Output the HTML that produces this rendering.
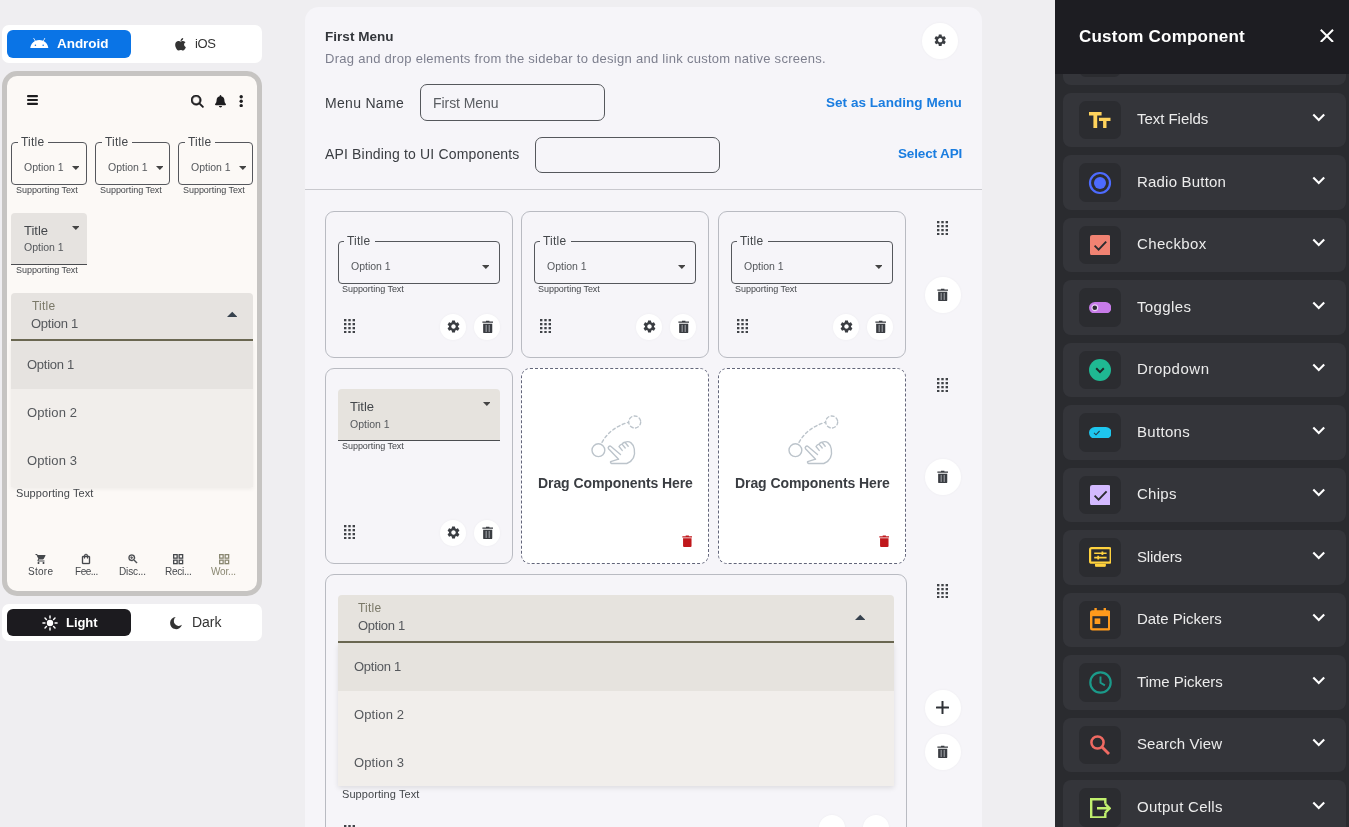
<!DOCTYPE html>
<html lang="en"><head><meta charset="utf-8"><title>Custom Component Builder</title>
<style>
html,body{margin:0;padding:0}
body{width:1349px;height:827px;overflow:hidden;position:relative;background:#efeef1;font-family:"Liberation Sans",sans-serif}
.abs{position:absolute;display:block}
.t{position:absolute;white-space:nowrap;will-change:transform}
.cbtn{position:absolute;background:#fff;border-radius:50%;box-shadow:0 0 3px rgba(0,0,0,.04)}
</style></head><body>
<div class="abs" style="left:2px;top:25px;width:260px;height:38px;background:#fff;border-radius:7px"></div>
<div class="abs" style="left:7px;top:30px;width:124px;height:28px;background:#0a74e6;border-radius:6px"></div>
<svg class="abs" style="left:30px;top:37.500px" width="18.600" height="10.500" viewBox="0 0 24 13.500" fill="#fff"><path d="M17.600 4.000l2-3.460a.42.42 0 0 0-.73-.42l-2.020 3.500A12.300 12.300 0 0 0 12 2.600c-1.740 0-3.380.36-4.850 1.020L5.130.12a.42.42 0 0 0-.73.420l2 3.460C2.970 5.870.600 9.350.250 13.500h23.500c-.35-4.150-2.720-7.630-6.150-9.500zM7 10.250a1 1 0 1 1 0-2 1 1 0 0 1 0 2zm10 0a1 1 0 1 1 0-2 1 1 0 0 1 0 2z"/></svg>
<div class="t " style="left:56.5px;top:33.5px;line-height:20px;font-size:13.5px;color:#fff;font-weight:bold;letter-spacing:-0.050px;">Android</div>
<svg class="abs" style="left:174px;top:37px" width="13" height="14.500" viewBox="0 0 384 512" fill="#333"><path d="M318.700 268.700c-.2-36.700 16.400-64.400 50-84.800-18.800-26.900-47.200-41.700-84.700-44.600-35.500-2.800-74.300 20.700-88.500 20.700-15 0-49.400-19.700-76.400-19.700C63.300 141.200 4 184.800 4 273.500q0 39.300 14.400 81.200c12.800 36.700 59 126.700 107.200 125.200 25.200-.6 43-17.900 75.800-17.900 31.800 0 48.300 17.900 76.400 17.900 48.600-.7 90.400-82.500 102.600-119.300-65.200-30.700-61.700-90-61.700-91.900zm-56.600-164.200c27.300-32.400 24.800-61.900 24-72.500-24.100 1.400-52 16.400-67.900 34.900-17.500 19.800-27.800 44.300-25.600 71.900 26.100 2 49.900-11.400 69.500-34.300z"/></svg>
<div class="t " style="left:195px;top:33.5px;line-height:20px;font-size:13px;color:#333;font-weight:normal;letter-spacing:-0.391px;">iOS</div>
<div class="abs" style="left:2px;top:71px;width:250px;height:515px;border:5px solid #c6c4c2;border-radius:15px;background:#fcf9f6"></div>
<svg class="abs" style="left:27px;top:94.500px" width="11" height="10" viewBox="0 0 11 10" fill="#1d1d1f"><rect y="0" width="11" height="2.200" rx="1"/><rect y="3.900" width="11" height="2.200" rx="1"/><rect y="7.800" width="11" height="2.200" rx="1"/></svg>
<svg class="abs" style="left:191px;top:95px" width="12.600" height="12.600" viewBox="0 0 512 512" fill="#1d1d1f" stroke="#1d1d1f" stroke-width="22"><path d="M416 208c0 45.900-14.900 88.300-40 122.700L502.600 457.400c12.500 12.500 12.500 32.800 0 45.300s-32.800 12.500-45.300 0L330.700 376c-34.400 25.200-76.800 40-122.700 40C93.100 416 0 322.900 0 208S93.100 0 208 0S416 93.100 416 208zM208 352a144 144 0 1 0 0-288 144 144 0 1 0 0 288z"/></svg>
<svg class="abs" style="left:215px;top:95px" width="11" height="12.500" viewBox="0 0 448 512" fill="#1d1d1f"><path d="M224 0c-17.700 0-32 14.300-32 32V51.200C119 66 64 130.600 64 208v18.800c0 47-17.300 92.400-48.500 127.600l-7.400 8.300c-8.400 9.400-10.400 22.900-5.300 34.400S19.400 416 32 416H416c12.600 0 24-7.400 29.200-18.900s3.100-25-5.300-34.400l-7.400-8.300C401.300 319.200 384 273.900 384 226.800V208c0-77.400-55-142-128-156.800V32c0-17.700-14.300-32-32-32zm45.300 493.300c12-12 18.700-28.300 18.700-45.300H224 160c0 17 6.700 33.300 18.700 45.300s28.300 18.700 45.300 18.700s33.300-6.700 45.300-18.700z"/></svg>
<svg class="abs" style="left:239px;top:95px" width="4.400" height="12.400" viewBox="0 0 4.400 12.400" fill="#1d1d1f"><circle cx="2.200" cy="1.800" r="1.700"/><circle cx="2.200" cy="6.200" r="1.700"/><circle cx="2.200" cy="10.600" r="1.700"/></svg>
<div class="abs" style="left:11px;top:142px;width:74px;height:40.5px;border:1px solid #55575c;border-radius:4px"></div><div class="abs" style="left:17.5px;top:140px;width:30.5px;height:4px;background:#fcf9f6"></div><div class="t " style="left:20.5px;top:131.5px;line-height:20px;font-size:12px;color:#44474b;font-weight:normal;letter-spacing:0.233px;">Title</div><div class="t " style="left:24.3px;top:156.9px;line-height:20px;font-size:10.5px;color:#55585c;font-weight:normal;letter-spacing:-0.000px;">Option 1</div><svg class="abs" style="left:71.5px;top:166.1px" width="7.6" height="4" viewBox="0 0 10 5" fill="#444"><path d="M0 0h10L5 5z"/></svg><div class="t " style="left:15.5px;top:179.9px;line-height:20px;font-size:9px;color:#44474b;font-weight:normal;letter-spacing:-0.039px;">Supporting Text</div>
<div class="abs" style="left:95px;top:142px;width:73px;height:40.5px;border:1px solid #55575c;border-radius:4px"></div><div class="abs" style="left:101.5px;top:140px;width:30.5px;height:4px;background:#fcf9f6"></div><div class="t " style="left:104.5px;top:131.5px;line-height:20px;font-size:12px;color:#44474b;font-weight:normal;letter-spacing:0.233px;">Title</div><div class="t " style="left:108.3px;top:156.9px;line-height:20px;font-size:10.5px;color:#55585c;font-weight:normal;letter-spacing:-0.000px;">Option 1</div><svg class="abs" style="left:155.5px;top:166.1px" width="7.6" height="4" viewBox="0 0 10 5" fill="#444"><path d="M0 0h10L5 5z"/></svg><div class="t " style="left:99.5px;top:179.9px;line-height:20px;font-size:9px;color:#44474b;font-weight:normal;letter-spacing:-0.039px;">Supporting Text</div>
<div class="abs" style="left:178px;top:142px;width:73px;height:40.5px;border:1px solid #55575c;border-radius:4px"></div><div class="abs" style="left:184.5px;top:140px;width:30.5px;height:4px;background:#fcf9f6"></div><div class="t " style="left:187.5px;top:131.5px;line-height:20px;font-size:12px;color:#44474b;font-weight:normal;letter-spacing:0.233px;">Title</div><div class="t " style="left:191.3px;top:156.9px;line-height:20px;font-size:10.5px;color:#55585c;font-weight:normal;letter-spacing:-0.000px;">Option 1</div><svg class="abs" style="left:238.5px;top:166.1px" width="7.6" height="4" viewBox="0 0 10 5" fill="#444"><path d="M0 0h10L5 5z"/></svg><div class="t " style="left:182.5px;top:179.9px;line-height:20px;font-size:9px;color:#44474b;font-weight:normal;letter-spacing:-0.039px;">Supporting Text</div>
<div class="abs" style="left:11px;top:213px;width:76px;height:51px;background:#e6e3e0;border-radius:4px 4px 0 0;border-bottom:1px solid #4a4c50"></div>
<div class="t " style="left:23.5px;top:220.5px;line-height:20px;font-size:13px;color:#44474b;font-weight:normal;">Title</div>
<div class="t " style="left:23.5px;top:237.0px;line-height:20px;font-size:10.5px;color:#55585c;font-weight:normal;letter-spacing:-0.000px;">Option 1</div>
<svg class="abs" style="left:71.7px;top:226.2px" width="7.6" height="4" viewBox="0 0 10 5" fill="#444"><path d="M0 0h10L5 5z"/></svg>
<div class="t " style="left:15.5px;top:260.0px;line-height:20px;font-size:9px;color:#44474b;font-weight:normal;letter-spacing:-0.039px;">Supporting Text</div>
<div class="abs" style="left:11px;top:293px;width:242px;height:46px;background:#e6e3e0;border-radius:4px 4px 0 0;border-bottom:2px solid #6b6852"></div>
<div class="t " style="left:31.8px;top:296.0px;line-height:20px;font-size:12px;color:#7a7868;font-weight:normal;letter-spacing:0.233px;">Title</div>
<div class="t " style="left:31.3px;top:313.7px;line-height:20px;font-size:13px;color:#55585c;font-weight:normal;letter-spacing:-0.270px;">Option 1</div>
<svg class="abs" style="left:226.9px;top:311.1px" width="10.5" height="6.5" viewBox="0 0 10 5" fill="#37424e"><path d="M0 5h10L5 0z"/></svg>
<div class="abs" style="left:11px;top:341px;width:242px;height:145.500px;background:#f1eeeb;box-shadow:0 2px 4px rgba(0,0,0,.06)"></div>
<div class="abs" style="left:11px;top:341px;width:242px;height:48px;background:#e6e3e0"></div>
<div class="t " style="left:27.3px;top:354.8px;line-height:20px;font-size:13px;color:#55585c;font-weight:normal;letter-spacing:-0.270px;">Option 1</div>
<div class="t " style="left:27.3px;top:402.9px;line-height:20px;font-size:13px;color:#55585c;font-weight:normal;letter-spacing:0.130px;">Option 2</div>
<div class="t " style="left:27.3px;top:451.0px;line-height:20px;font-size:13px;color:#55585c;font-weight:normal;letter-spacing:0.130px;">Option 3</div>
<div class="t " style="left:15.5px;top:482.6px;line-height:20px;font-size:11px;color:#44474b;font-weight:normal;letter-spacing:0.077px;">Supporting Text</div>
<svg class="abs" style="left:35.0px;top:553px" width="12" height="12" viewBox="0 0 24 24" fill="#45484c" stroke="#45484c" stroke-width=".7"><path stroke="none" d="M7 18c-1.100 0-1.990.9-1.990 2S5.900 22 7 22s2-.9 2-2-.9-2-2-2zM1 2v2h2l3.600 7.590-1.350 2.450c-.16.280-.25.610-.25.960 0 1.100.9 2 2 2h12v-2H7.420c-.14 0-.25-.110-.25-.25l.03-.120.9-1.630h7.450c.75 0 1.410-.410 1.750-1.030l3.580-6.490A1.003 1.003 0 0 0 20 4H5.210l-.94-2H1zm16 16c-1.100 0-1.990.9-1.990 2s.890 2 1.990 2 2-.9 2-2-.9-2-2-2z"/></svg>
<div class="t " style="left:28.2px;top:562.3px;line-height:20px;font-size:10px;color:#45484c;font-weight:normal;letter-spacing:0.259px;">Store</div>
<svg class="abs" style="left:80.0px;top:553px" width="12" height="12" viewBox="0 0 24 24" fill="#45484c" stroke="#45484c" stroke-width=".7"><path d="M18 6h-2c0-2.210-1.790-4-4-4S8 3.790 8 6H6c-1.100 0-2 .9-2 2v12c0 1.100.9 2 2 2h12c1.100 0 2-.9 2-2V8c0-1.100-.9-2-2-2zm-6-2c1.100 0 2 .9 2 2h-4c0-1.100.9-2 2-2zm6 16H6V8h2v2c0 .55.450 1 1 1s1-.45 1-1V8h4v2c0 .55.450 1 1 1s1-.45 1-1V8h2v12z"/></svg>
<div class="t " style="left:74.5px;top:562.3px;line-height:20px;font-size:10px;color:#45484c;font-weight:normal;letter-spacing:-0.480px;">Fee...</div>
<svg class="abs" style="left:126.5px;top:553px" width="12" height="12" viewBox="0 0 24 24" fill="#45484c" stroke="#45484c" stroke-width=".7"><path d="M15.500 14h-.79l-.28-.27A6.470 6.470 0 0 0 16 9.500 6.500 6.500 0 1 0 9.500 16c1.610 0 3.090-.59 4.230-1.570l.27.280v.79l5 4.990L20.490 19l-4.990-5zm-6 0C7.010 14 5 11.990 5 9.500S7.010 5 9.500 5 14 7.010 14 9.500 11.990 14 9.500 14zm.5-7H9v2H7v1h2v2h1v-2h2V9h-2z"/></svg>
<div class="t " style="left:118.9px;top:562.3px;line-height:20px;font-size:10px;color:#45484c;font-weight:normal;letter-spacing:-0.126px;">Disc...</div>
<svg class="abs" style="left:172.0px;top:553px" width="12" height="12" viewBox="0 0 24 24" fill="#45484c" stroke="#45484c" stroke-width=".7"><g fill="none" stroke-width="2.600"><rect x="3.300" y="3.300" width="7" height="7"/><rect x="14.300" y="3.300" width="7" height="7"/><rect x="3.300" y="14.300" width="7" height="7"/><rect x="14.300" y="14.300" width="7" height="7"/></g></svg>
<div class="t " style="left:164.5px;top:562.3px;line-height:20px;font-size:10px;color:#45484c;font-weight:normal;letter-spacing:-0.249px;">Reci...</div>
<svg class="abs" style="left:217.5px;top:553px" width="12" height="12" viewBox="0 0 24 24" fill="#8a8872" stroke="#8a8872" stroke-width=".7"><g fill="none" stroke-width="2.600"><rect x="3.300" y="3.300" width="7" height="7"/><rect x="14.300" y="3.300" width="7" height="7"/><rect x="3.300" y="14.300" width="7" height="7"/><rect x="14.300" y="14.300" width="7" height="7"/></g></svg>
<div class="t " style="left:210.9px;top:562.3px;line-height:20px;font-size:10px;color:#8a8872;font-weight:normal;letter-spacing:-0.173px;">Wor...</div>
<div class="abs" style="left:2px;top:604px;width:260px;height:37px;background:#fff;border-radius:7px"></div>
<div class="abs" style="left:7px;top:609px;width:124px;height:27px;background:#1c1b1f;border-radius:6px"></div>
<svg class="abs" style="left:41.800px;top:615px" width="16" height="16" viewBox="0 0 24 24" fill="#fff"><circle cx="12" cy="12" r="4.800"/><path d="M19.60 12.00L22.60 12.00" stroke="#fff" stroke-width="2.200" stroke-linecap="round"/><path d="M17.37 17.37L19.50 19.50" stroke="#fff" stroke-width="2.200" stroke-linecap="round"/><path d="M12.00 19.60L12.00 22.60" stroke="#fff" stroke-width="2.200" stroke-linecap="round"/><path d="M6.63 17.37L4.50 19.50" stroke="#fff" stroke-width="2.200" stroke-linecap="round"/><path d="M4.40 12.00L1.40 12.00" stroke="#fff" stroke-width="2.200" stroke-linecap="round"/><path d="M6.63 6.63L4.50 4.50" stroke="#fff" stroke-width="2.200" stroke-linecap="round"/><path d="M12.00 4.40L12.00 1.40" stroke="#fff" stroke-width="2.200" stroke-linecap="round"/><path d="M17.37 6.63L19.50 4.50" stroke="#fff" stroke-width="2.200" stroke-linecap="round"/></svg>
<div class="t " style="left:65.5px;top:612.5px;line-height:20px;font-size:13px;color:#fff;font-weight:bold;letter-spacing:-0.053px;">Light</div>
<svg class="abs" style="left:169px;top:615.500px" width="14" height="14" viewBox="0 0 24 24" fill="#333"><path d="M11.500 1.800a10.400 10.400 0 1 0 10.700 13.400 8.200 8.200 0 0 1 -10.700 -13.400z"/></svg>
<div class="t " style="left:192px;top:612.3px;line-height:20px;font-size:14px;color:#333;font-weight:normal;letter-spacing:-0.016px;">Dark</div>
<div class="abs" style="left:305px;top:7px;width:677px;height:840px;background:#f6f5f9;border-radius:14px 14px 0 0"></div>
<div class="t " style="left:324.5px;top:26.8px;line-height:20px;font-size:13.5px;color:#33363b;font-weight:bold;letter-spacing:0.033px;">First Menu</div>
<div class="t " style="left:324.5px;top:49.0px;line-height:20px;font-size:13px;color:#7d7f8e;font-weight:normal;letter-spacing:0.279px;">Drag and drop elements from the sidebar to design and link custom native screens.</div>
<div class="cbtn" style="left:922.0px;top:23.0px;width:36px;height:36px"></div><svg class="abs" style="left:932.8px;top:33.3px" width="14.4" height="14.4" viewBox="0 0 24 24" fill="#3a3d42"><path d="M19.14 12.94c.04-.3.06-.61.06-.94 0-.32-.02-.64-.07-.94l2.03-1.58a.49.49 0 0 0 .12-.61l-1.92-3.32a.488.488 0 0 0-.59-.22l-2.39.96c-.5-.38-1.03-.7-1.62-.94l-.36-2.54a.484.484 0 0 0-.48-.41h-3.84c-.24 0-.43.17-.47.41l-.36 2.54c-.59.24-1.13.57-1.62.94l-2.39-.96c-.22-.08-.47 0-.59.22L2.74 8.87c-.12.21-.08.47.12.61l2.03 1.58c-.05.3-.09.63-.09.94s.02.64.07.94l-2.03 1.58a.49.49 0 0 0-.12.61l1.92 3.32c.12.22.37.29.59.22l2.39-.96c.5.38 1.03.7 1.62.94l.36 2.54c.05.24.24.41.48.41h3.84c.24 0 .44-.17.47-.41l.36-2.54c.59-.24 1.13-.56 1.62-.94l2.39.96c.22.08.47 0 .59-.22l1.92-3.32c.12-.22.07-.47-.12-.61l-2.01-1.58zM12 15.6c-1.98 0-3.6-1.62-3.6-3.6s1.620-3.6 3.6-3.600 3.6 1.62 3.6 3.6-1.62 3.600-3.6 3.600z"/></svg>
<div class="t " style="left:324.5px;top:92.6px;line-height:20px;font-size:14px;color:#3a3d42;font-weight:normal;letter-spacing:0.304px;">Menu Name</div>
<div class="abs" style="left:420px;top:84px;width:183px;height:35px;border:1px solid #55585c;border-radius:7px"></div>
<div class="t " style="left:433px;top:92.6px;line-height:20px;font-size:14px;color:#5a5d62;font-weight:normal;letter-spacing:-0.062px;">First Menu</div>
<div class="t " style="left:826px;top:92.5px;line-height:20px;font-size:13.5px;color:#1a7de0;font-weight:bold;letter-spacing:0.041px;">Set as Landing Menu</div>
<div class="t " style="left:324.5px;top:144.4px;line-height:20px;font-size:14px;color:#3a3d42;font-weight:normal;letter-spacing:0.165px;">API Binding to UI Components</div>
<div class="abs" style="left:535px;top:137px;width:183px;height:33.500px;border:1px solid #55585c;border-radius:7px"></div>
<div class="t " style="left:897.5px;top:144.3px;line-height:20px;font-size:13.5px;color:#1a7de0;font-weight:bold;letter-spacing:-0.133px;">Select API</div>
<div class="abs" style="left:305px;top:189px;width:677px;height:1px;background:#c9c9ce"></div>
<div class="abs" style="left:325px;top:211px;width:185.500px;height:145px;border:1px solid #b9bbc2;border-radius:9px"></div>
<div class="abs" style="left:338px;top:241px;width:160px;height:40.5px;border:1px solid #55575c;border-radius:4px"></div><div class="abs" style="left:344px;top:239px;width:30.5px;height:4px;background:#f6f5f9"></div><div class="t " style="left:347px;top:230.5px;line-height:20px;font-size:12px;color:#44474b;font-weight:normal;letter-spacing:0.233px;">Title</div><div class="t " style="left:350.5px;top:255.9px;line-height:20px;font-size:10.5px;color:#55585c;font-weight:normal;letter-spacing:-0.000px;">Option 1</div><svg class="abs" style="left:481.7px;top:265.1px" width="7.6" height="4" viewBox="0 0 10 5" fill="#444"><path d="M0 0h10L5 5z"/></svg><div class="t " style="left:341.5px;top:279.1px;line-height:20px;font-size:9px;color:#44474b;font-weight:normal;letter-spacing:-0.039px;">Supporting Text</div>
<svg class="abs" style="left:344px;top:318.7px" width="11" height="14.3" viewBox="0 0 11 14.3" fill="#3f4247"><rect x="0.0" y="0.0" width="2.4" height="2.3"/><rect x="4.3" y="0.0" width="2.4" height="2.3"/><rect x="8.6" y="0.0" width="2.4" height="2.3"/><rect x="0.0" y="4.0" width="2.4" height="2.3"/><rect x="4.3" y="4.0" width="2.4" height="2.3"/><rect x="8.6" y="4.0" width="2.4" height="2.3"/><rect x="0.0" y="8.0" width="2.4" height="2.3"/><rect x="4.3" y="8.0" width="2.4" height="2.3"/><rect x="8.6" y="8.0" width="2.4" height="2.3"/><rect x="0.0" y="12.0" width="2.4" height="2.3"/><rect x="4.3" y="12.0" width="2.4" height="2.3"/><rect x="8.6" y="12.0" width="2.4" height="2.3"/></svg>
<div class="cbtn" style="left:440.3px;top:314.1px;width:26px;height:26px"></div><svg class="abs" style="left:445.8px;top:319.1px" width="15" height="15" viewBox="0 0 24 24" fill="#3a3d42"><path d="M19.14 12.94c.04-.3.06-.61.06-.94 0-.32-.02-.64-.07-.94l2.03-1.58a.49.49 0 0 0 .12-.61l-1.92-3.32a.488.488 0 0 0-.59-.22l-2.39.96c-.5-.38-1.03-.7-1.62-.94l-.36-2.54a.484.484 0 0 0-.48-.41h-3.84c-.24 0-.43.17-.47.41l-.36 2.54c-.59.24-1.13.57-1.62.94l-2.39-.96c-.22-.08-.47 0-.59.22L2.74 8.87c-.12.21-.08.47.12.61l2.03 1.58c-.05.3-.09.63-.09.94s.02.64.07.94l-2.03 1.58a.49.49 0 0 0-.12.61l1.92 3.32c.12.22.37.29.59.22l2.39-.96c.5.38 1.03.7 1.62.94l.36 2.54c.05.24.24.41.48.41h3.84c.24 0 .44-.17.47-.41l.36-2.54c.59-.24 1.13-.56 1.62-.94l2.39.96c.22.08.47 0 .59-.22l1.92-3.32c.12-.22.07-.47-.12-.61l-2.01-1.58zM12 15.6c-1.98 0-3.6-1.62-3.6-3.6s1.620-3.6 3.6-3.600 3.6 1.62 3.6 3.6-1.62 3.600-3.6 3.600z"/></svg>
<div class="cbtn" style="left:474.2px;top:314.1px;width:26px;height:26px"></div><svg class="abs" style="left:481.5px;top:319.6px" width="11.4" height="13.6" viewBox="0 0 12 14"><path fill="#3a3d42" d="M4.2 0.6h3.6v0.9H11.6v1.3H0.400V1.500H4.200z"/><path fill="#3a3d42" d="M1.200 3.700h9.600V12.600a1.200 1.200 0 0 1 -1.200 1.200H2.400a1.200 1.200 0 0 1 -1.200 -1.200z"/><rect fill="#9a9ca2" x="3.8" y="5" width="1.200" height="7.400"/><rect fill="#9a9ca2" x="7" y="5" width="1.200" height="7.400"/></svg>
<div class="abs" style="left:521px;top:211px;width:185.500px;height:145px;border:1px solid #b9bbc2;border-radius:9px"></div>
<div class="abs" style="left:534px;top:241px;width:160px;height:40.5px;border:1px solid #55575c;border-radius:4px"></div><div class="abs" style="left:540px;top:239px;width:30.5px;height:4px;background:#f6f5f9"></div><div class="t " style="left:543px;top:230.5px;line-height:20px;font-size:12px;color:#44474b;font-weight:normal;letter-spacing:0.233px;">Title</div><div class="t " style="left:546.5px;top:255.9px;line-height:20px;font-size:10.5px;color:#55585c;font-weight:normal;letter-spacing:-0.000px;">Option 1</div><svg class="abs" style="left:677.7px;top:265.1px" width="7.6" height="4" viewBox="0 0 10 5" fill="#444"><path d="M0 0h10L5 5z"/></svg><div class="t " style="left:537.5px;top:279.1px;line-height:20px;font-size:9px;color:#44474b;font-weight:normal;letter-spacing:-0.039px;">Supporting Text</div>
<svg class="abs" style="left:540px;top:318.7px" width="11" height="14.3" viewBox="0 0 11 14.3" fill="#3f4247"><rect x="0.0" y="0.0" width="2.4" height="2.3"/><rect x="4.3" y="0.0" width="2.4" height="2.3"/><rect x="8.6" y="0.0" width="2.4" height="2.3"/><rect x="0.0" y="4.0" width="2.4" height="2.3"/><rect x="4.3" y="4.0" width="2.4" height="2.3"/><rect x="8.6" y="4.0" width="2.4" height="2.3"/><rect x="0.0" y="8.0" width="2.4" height="2.3"/><rect x="4.3" y="8.0" width="2.4" height="2.3"/><rect x="8.6" y="8.0" width="2.4" height="2.3"/><rect x="0.0" y="12.0" width="2.4" height="2.3"/><rect x="4.3" y="12.0" width="2.4" height="2.3"/><rect x="8.6" y="12.0" width="2.4" height="2.3"/></svg>
<div class="cbtn" style="left:636.3px;top:314.1px;width:26px;height:26px"></div><svg class="abs" style="left:641.8px;top:319.1px" width="15" height="15" viewBox="0 0 24 24" fill="#3a3d42"><path d="M19.14 12.94c.04-.3.06-.61.06-.94 0-.32-.02-.64-.07-.94l2.03-1.58a.49.49 0 0 0 .12-.61l-1.92-3.32a.488.488 0 0 0-.59-.22l-2.39.96c-.5-.38-1.03-.7-1.62-.94l-.36-2.54a.484.484 0 0 0-.48-.41h-3.84c-.24 0-.43.17-.47.41l-.36 2.54c-.59.24-1.13.57-1.62.94l-2.39-.96c-.22-.08-.47 0-.59.22L2.74 8.87c-.12.21-.08.47.12.61l2.03 1.58c-.05.3-.09.63-.09.94s.02.64.07.94l-2.03 1.58a.49.49 0 0 0-.12.61l1.92 3.32c.12.22.37.29.59.22l2.39-.96c.5.38 1.03.7 1.62.94l.36 2.54c.05.24.24.41.48.41h3.84c.24 0 .44-.17.47-.41l.36-2.54c.59-.24 1.13-.56 1.62-.94l2.39.96c.22.08.47 0 .59-.22l1.92-3.32c.12-.22.07-.47-.12-.61l-2.01-1.58zM12 15.6c-1.98 0-3.6-1.62-3.6-3.6s1.620-3.6 3.6-3.600 3.6 1.62 3.6 3.6-1.62 3.600-3.6 3.600z"/></svg>
<div class="cbtn" style="left:670.2px;top:314.1px;width:26px;height:26px"></div><svg class="abs" style="left:677.5px;top:319.6px" width="11.4" height="13.6" viewBox="0 0 12 14"><path fill="#3a3d42" d="M4.2 0.6h3.6v0.9H11.6v1.3H0.400V1.500H4.200z"/><path fill="#3a3d42" d="M1.200 3.700h9.600V12.600a1.200 1.200 0 0 1 -1.200 1.200H2.400a1.200 1.200 0 0 1 -1.200 -1.200z"/><rect fill="#9a9ca2" x="3.8" y="5" width="1.200" height="7.400"/><rect fill="#9a9ca2" x="7" y="5" width="1.200" height="7.400"/></svg>
<div class="abs" style="left:718px;top:211px;width:185.500px;height:145px;border:1px solid #b9bbc2;border-radius:9px"></div>
<div class="abs" style="left:731px;top:241px;width:160px;height:40.5px;border:1px solid #55575c;border-radius:4px"></div><div class="abs" style="left:737px;top:239px;width:30.5px;height:4px;background:#f6f5f9"></div><div class="t " style="left:740px;top:230.5px;line-height:20px;font-size:12px;color:#44474b;font-weight:normal;letter-spacing:0.233px;">Title</div><div class="t " style="left:743.5px;top:255.9px;line-height:20px;font-size:10.5px;color:#55585c;font-weight:normal;letter-spacing:-0.000px;">Option 1</div><svg class="abs" style="left:874.7px;top:265.1px" width="7.6" height="4" viewBox="0 0 10 5" fill="#444"><path d="M0 0h10L5 5z"/></svg><div class="t " style="left:734.5px;top:279.1px;line-height:20px;font-size:9px;color:#44474b;font-weight:normal;letter-spacing:-0.039px;">Supporting Text</div>
<svg class="abs" style="left:737px;top:318.7px" width="11" height="14.3" viewBox="0 0 11 14.3" fill="#3f4247"><rect x="0.0" y="0.0" width="2.4" height="2.3"/><rect x="4.3" y="0.0" width="2.4" height="2.3"/><rect x="8.6" y="0.0" width="2.4" height="2.3"/><rect x="0.0" y="4.0" width="2.4" height="2.3"/><rect x="4.3" y="4.0" width="2.4" height="2.3"/><rect x="8.6" y="4.0" width="2.4" height="2.3"/><rect x="0.0" y="8.0" width="2.4" height="2.3"/><rect x="4.3" y="8.0" width="2.4" height="2.3"/><rect x="8.6" y="8.0" width="2.4" height="2.3"/><rect x="0.0" y="12.0" width="2.4" height="2.3"/><rect x="4.3" y="12.0" width="2.4" height="2.3"/><rect x="8.6" y="12.0" width="2.4" height="2.3"/></svg>
<div class="cbtn" style="left:833.3px;top:314.1px;width:26px;height:26px"></div><svg class="abs" style="left:838.8px;top:319.1px" width="15" height="15" viewBox="0 0 24 24" fill="#3a3d42"><path d="M19.14 12.94c.04-.3.06-.61.06-.94 0-.32-.02-.64-.07-.94l2.03-1.58a.49.49 0 0 0 .12-.61l-1.92-3.32a.488.488 0 0 0-.59-.22l-2.39.96c-.5-.38-1.03-.7-1.62-.94l-.36-2.54a.484.484 0 0 0-.48-.41h-3.84c-.24 0-.43.17-.47.41l-.36 2.54c-.59.24-1.13.57-1.62.94l-2.39-.96c-.22-.08-.47 0-.59.22L2.74 8.87c-.12.21-.08.47.12.61l2.03 1.58c-.05.3-.09.63-.09.94s.02.64.07.94l-2.03 1.58a.49.49 0 0 0-.12.61l1.92 3.32c.12.22.37.29.59.22l2.39-.96c.5.38 1.03.7 1.62.94l.36 2.54c.05.24.24.41.48.41h3.84c.24 0 .44-.17.47-.41l.36-2.54c.59-.24 1.13-.56 1.62-.94l2.39.96c.22.08.47 0 .59-.22l1.92-3.32c.12-.22.07-.47-.12-.61l-2.01-1.58zM12 15.6c-1.98 0-3.6-1.62-3.6-3.6s1.620-3.6 3.6-3.600 3.6 1.62 3.6 3.6-1.62 3.600-3.6 3.600z"/></svg>
<div class="cbtn" style="left:867.2px;top:314.1px;width:26px;height:26px"></div><svg class="abs" style="left:874.5px;top:319.6px" width="11.4" height="13.6" viewBox="0 0 12 14"><path fill="#3a3d42" d="M4.2 0.6h3.6v0.9H11.6v1.3H0.400V1.500H4.200z"/><path fill="#3a3d42" d="M1.200 3.700h9.600V12.600a1.200 1.200 0 0 1 -1.200 1.200H2.400a1.200 1.200 0 0 1 -1.200 -1.200z"/><rect fill="#9a9ca2" x="3.8" y="5" width="1.200" height="7.400"/><rect fill="#9a9ca2" x="7" y="5" width="1.200" height="7.400"/></svg>
<svg class="abs" style="left:937px;top:220.8px" width="11" height="14.3" viewBox="0 0 11 14.3" fill="#3f4247"><rect x="0.0" y="0.0" width="2.4" height="2.3"/><rect x="4.3" y="0.0" width="2.4" height="2.3"/><rect x="8.6" y="0.0" width="2.4" height="2.3"/><rect x="0.0" y="4.0" width="2.4" height="2.3"/><rect x="4.3" y="4.0" width="2.4" height="2.3"/><rect x="8.6" y="4.0" width="2.4" height="2.3"/><rect x="0.0" y="8.0" width="2.4" height="2.3"/><rect x="4.3" y="8.0" width="2.4" height="2.3"/><rect x="8.6" y="8.0" width="2.4" height="2.3"/><rect x="0.0" y="12.0" width="2.4" height="2.3"/><rect x="4.3" y="12.0" width="2.4" height="2.3"/><rect x="8.6" y="12.0" width="2.4" height="2.3"/></svg>
<div class="cbtn" style="left:924.5px;top:277.0px;width:36px;height:36px"></div><svg class="abs" style="left:936.8px;top:287.9px" width="11.4" height="13.6" viewBox="0 0 12 14"><path fill="#3a3d42" d="M4.2 0.6h3.6v0.9H11.6v1.3H0.400V1.500H4.200z"/><path fill="#3a3d42" d="M1.200 3.700h9.600V12.600a1.200 1.200 0 0 1 -1.200 1.200H2.400a1.200 1.200 0 0 1 -1.200 -1.200z"/><rect fill="#9a9ca2" x="3.8" y="5" width="1.200" height="7.400"/><rect fill="#9a9ca2" x="7" y="5" width="1.200" height="7.400"/></svg>
<div class="abs" style="left:325px;top:368px;width:185.500px;height:193.500px;border:1px solid #b9bbc2;border-radius:9px"></div>
<div class="abs" style="left:338px;top:389px;width:162px;height:50.500px;background:#e6e3de;border-radius:4px 4px 0 0;border-bottom:1px solid #4a4c50"></div>
<div class="t " style="left:349.5px;top:396.8px;line-height:20px;font-size:13px;color:#44474b;font-weight:normal;">Title</div>
<div class="t " style="left:349.5px;top:413.6px;line-height:20px;font-size:10.5px;color:#55585c;font-weight:normal;letter-spacing:-0.000px;">Option 1</div>
<svg class="abs" style="left:482.5px;top:402.0px" width="7.6" height="4" viewBox="0 0 10 5" fill="#444"><path d="M0 0h10L5 5z"/></svg>
<div class="t " style="left:341.5px;top:436.2px;line-height:20px;font-size:9px;color:#44474b;font-weight:normal;letter-spacing:-0.039px;">Supporting Text</div>
<svg class="abs" style="left:344px;top:525px" width="11" height="14.3" viewBox="0 0 11 14.3" fill="#3f4247"><rect x="0.0" y="0.0" width="2.4" height="2.3"/><rect x="4.3" y="0.0" width="2.4" height="2.3"/><rect x="8.6" y="0.0" width="2.4" height="2.3"/><rect x="0.0" y="4.0" width="2.4" height="2.3"/><rect x="4.3" y="4.0" width="2.4" height="2.3"/><rect x="8.6" y="4.0" width="2.4" height="2.3"/><rect x="0.0" y="8.0" width="2.4" height="2.3"/><rect x="4.3" y="8.0" width="2.4" height="2.3"/><rect x="8.6" y="8.0" width="2.4" height="2.3"/><rect x="0.0" y="12.0" width="2.4" height="2.3"/><rect x="4.3" y="12.0" width="2.4" height="2.3"/><rect x="8.6" y="12.0" width="2.4" height="2.3"/></svg>
<div class="cbtn" style="left:440.3px;top:520.2px;width:26px;height:26px"></div><svg class="abs" style="left:445.8px;top:525.2px" width="15" height="15" viewBox="0 0 24 24" fill="#3a3d42"><path d="M19.14 12.94c.04-.3.06-.61.06-.94 0-.32-.02-.64-.07-.94l2.03-1.58a.49.49 0 0 0 .12-.61l-1.92-3.32a.488.488 0 0 0-.59-.22l-2.39.96c-.5-.38-1.03-.7-1.62-.94l-.36-2.54a.484.484 0 0 0-.48-.41h-3.84c-.24 0-.43.17-.47.41l-.36 2.54c-.59.24-1.13.57-1.62.94l-2.39-.96c-.22-.08-.47 0-.59.22L2.74 8.87c-.12.21-.08.47.12.61l2.03 1.58c-.05.3-.09.63-.09.94s.02.64.07.94l-2.03 1.58a.49.49 0 0 0-.12.61l1.92 3.32c.12.22.37.29.59.22l2.39-.96c.5.38 1.03.7 1.62.94l.36 2.54c.05.24.24.41.48.41h3.84c.24 0 .44-.17.47-.41l.36-2.54c.59-.24 1.13-.56 1.62-.94l2.39.96c.22.08.47 0 .59-.22l1.92-3.32c.12-.22.07-.47-.12-.61l-2.01-1.58zM12 15.6c-1.98 0-3.6-1.62-3.6-3.6s1.620-3.6 3.6-3.600 3.6 1.62 3.6 3.6-1.62 3.600-3.6 3.600z"/></svg>
<div class="cbtn" style="left:474.2px;top:520.2px;width:26px;height:26px"></div><svg class="abs" style="left:481.5px;top:525.7px" width="11.4" height="13.6" viewBox="0 0 12 14"><path fill="#3a3d42" d="M4.2 0.6h3.6v0.9H11.6v1.3H0.400V1.500H4.200z"/><path fill="#3a3d42" d="M1.200 3.700h9.600V12.600a1.200 1.200 0 0 1 -1.200 1.200H2.400a1.200 1.200 0 0 1 -1.200 -1.200z"/><rect fill="#9a9ca2" x="3.8" y="5" width="1.200" height="7.400"/><rect fill="#9a9ca2" x="7" y="5" width="1.200" height="7.400"/></svg>
<div class="abs" style="left:521px;top:368px;width:186px;height:193.500px;border:1px dashed #62657a;border-radius:9px;background:#fff"></div>
<svg class="abs" style="left:589.5px;top:414px" width="52" height="52" viewBox="0 0 52 52"><g fill="none" stroke="#bcc4cb" stroke-width="1.400" stroke-linecap="round" stroke-linejoin="round"><circle cx="8.400" cy="36.200" r="6.400"/><circle cx="44.700" cy="8" r="6" stroke-dasharray="2.900 2.500"/><path d="M12 28.300Q20 14 38 8.400" stroke-dasharray="2.900 2.600"/><path d="M28.600 45.200L18.500 34.800C17.400 33.300 19.600 31.300 21 32.500L30.500 40.500M29 32.500L32.200 36.400M29 32.500C29.800 31 31 30.300 32 30.100L35.200 34M32 30.100C33 28.800 34 28.400 35 28.300L38.200 32.200M35 28.300C39.500 26 43.500 30 44.300 35C45.500 42 43 47 36.800 49.500L21.700 49.500C20.600 49 20.300 48.200 20.600 47.600L28.600 45.200"/></g></svg>
<div class="t " style="left:538px;top:472.9px;line-height:20px;font-size:14px;color:#3a3d42;font-weight:bold;letter-spacing:-0.078px;">Drag Components Here</div>
<svg class="abs" style="left:681.5px;top:534.2px" width="10.6" height="14.2" viewBox="0 0 12 14"><path fill="#c0181c" d="M4.2 0.6h3.6v0.9H11.6v1.3H0.400V1.500H4.200z"/><path fill="#c0181c" d="M1.200 3.700h9.600V12.600a1.200 1.200 0 0 1 -1.200 1.200H2.400a1.200 1.200 0 0 1 -1.200 -1.200z"/><rect fill="#c0181c" x="3.8" y="5" width="1.200" height="7.400"/><rect fill="#c0181c" x="7" y="5" width="1.200" height="7.400"/></svg>
<div class="abs" style="left:718px;top:368px;width:186px;height:193.500px;border:1px dashed #62657a;border-radius:9px;background:#fff"></div>
<svg class="abs" style="left:786.5px;top:414px" width="52" height="52" viewBox="0 0 52 52"><g fill="none" stroke="#bcc4cb" stroke-width="1.400" stroke-linecap="round" stroke-linejoin="round"><circle cx="8.400" cy="36.200" r="6.400"/><circle cx="44.700" cy="8" r="6" stroke-dasharray="2.900 2.500"/><path d="M12 28.300Q20 14 38 8.400" stroke-dasharray="2.900 2.600"/><path d="M28.600 45.200L18.500 34.800C17.400 33.300 19.600 31.300 21 32.500L30.500 40.500M29 32.500L32.200 36.400M29 32.500C29.800 31 31 30.300 32 30.100L35.200 34M32 30.100C33 28.800 34 28.400 35 28.300L38.200 32.200M35 28.300C39.500 26 43.500 30 44.300 35C45.500 42 43 47 36.800 49.500L21.700 49.500C20.600 49 20.300 48.200 20.600 47.600L28.600 45.200"/></g></svg>
<div class="t " style="left:735px;top:472.9px;line-height:20px;font-size:14px;color:#3a3d42;font-weight:bold;letter-spacing:-0.078px;">Drag Components Here</div>
<svg class="abs" style="left:878.5px;top:534.2px" width="10.6" height="14.2" viewBox="0 0 12 14"><path fill="#c0181c" d="M4.2 0.6h3.6v0.9H11.6v1.3H0.400V1.500H4.200z"/><path fill="#c0181c" d="M1.200 3.700h9.600V12.600a1.200 1.200 0 0 1 -1.200 1.200H2.400a1.200 1.200 0 0 1 -1.200 -1.200z"/><rect fill="#c0181c" x="3.8" y="5" width="1.200" height="7.400"/><rect fill="#c0181c" x="7" y="5" width="1.200" height="7.400"/></svg>
<svg class="abs" style="left:937px;top:377.8px" width="11" height="14.3" viewBox="0 0 11 14.3" fill="#3f4247"><rect x="0.0" y="0.0" width="2.4" height="2.3"/><rect x="4.3" y="0.0" width="2.4" height="2.3"/><rect x="8.6" y="0.0" width="2.4" height="2.3"/><rect x="0.0" y="4.0" width="2.4" height="2.3"/><rect x="4.3" y="4.0" width="2.4" height="2.3"/><rect x="8.6" y="4.0" width="2.4" height="2.3"/><rect x="0.0" y="8.0" width="2.4" height="2.3"/><rect x="4.3" y="8.0" width="2.4" height="2.3"/><rect x="8.6" y="8.0" width="2.4" height="2.3"/><rect x="0.0" y="12.0" width="2.4" height="2.3"/><rect x="4.3" y="12.0" width="2.4" height="2.3"/><rect x="8.6" y="12.0" width="2.4" height="2.3"/></svg>
<div class="cbtn" style="left:924.5px;top:458.8px;width:36px;height:36px"></div><svg class="abs" style="left:936.8px;top:469.6px" width="11.4" height="13.6" viewBox="0 0 12 14"><path fill="#3a3d42" d="M4.2 0.6h3.6v0.9H11.6v1.3H0.400V1.500H4.200z"/><path fill="#3a3d42" d="M1.200 3.700h9.600V12.600a1.200 1.200 0 0 1 -1.200 1.200H2.400a1.200 1.200 0 0 1 -1.200 -1.200z"/><rect fill="#9a9ca2" x="3.8" y="5" width="1.200" height="7.400"/><rect fill="#9a9ca2" x="7" y="5" width="1.200" height="7.400"/></svg>
<div class="abs" style="left:325px;top:574px;width:580px;height:300px;border:1px solid #b9bbc2;border-radius:9px"></div>
<div class="abs" style="left:338px;top:595px;width:556px;height:46px;background:#e6e3de;border-radius:4px 4px 0 0;border-bottom:2px solid #6b6852"></div>
<div class="t " style="left:357.8px;top:597.8px;line-height:20px;font-size:12px;color:#7a7868;font-weight:normal;letter-spacing:0.233px;">Title</div>
<div class="t " style="left:357.5px;top:615.8px;line-height:20px;font-size:13px;color:#55585c;font-weight:normal;letter-spacing:-0.270px;">Option 1</div>
<svg class="abs" style="left:854.8px;top:613.5px" width="10.5" height="6.5" viewBox="0 0 10 5" fill="#37424e"><path d="M0 5h10L5 0z"/></svg>
<div class="abs" style="left:338px;top:643px;width:556px;height:143px;background:#f1eeeb;box-shadow:0 2px 5px rgba(0,0,0,.10)"></div>
<div class="abs" style="left:338px;top:643px;width:556px;height:48px;background:#e6e3de"></div>
<div class="t " style="left:353.5px;top:657.0px;line-height:20px;font-size:13px;color:#55585c;font-weight:normal;letter-spacing:-0.270px;">Option 1</div>
<div class="t " style="left:353.5px;top:704.8px;line-height:20px;font-size:13px;color:#55585c;font-weight:normal;letter-spacing:0.130px;">Option 2</div>
<div class="t " style="left:353.5px;top:753.0px;line-height:20px;font-size:13px;color:#55585c;font-weight:normal;letter-spacing:0.130px;">Option 3</div>
<div class="t " style="left:341.5px;top:784.4px;line-height:20px;font-size:11px;color:#44474b;font-weight:normal;letter-spacing:0.077px;">Supporting Text</div>
<svg class="abs" style="left:344px;top:824.7px" width="11" height="14.3" viewBox="0 0 11 14.3" fill="#3f4247"><rect x="0.0" y="0.0" width="2.4" height="2.3"/><rect x="4.3" y="0.0" width="2.4" height="2.3"/><rect x="8.6" y="0.0" width="2.4" height="2.3"/><rect x="0.0" y="4.0" width="2.4" height="2.3"/><rect x="4.3" y="4.0" width="2.4" height="2.3"/><rect x="8.6" y="4.0" width="2.4" height="2.3"/><rect x="0.0" y="8.0" width="2.4" height="2.3"/><rect x="4.3" y="8.0" width="2.4" height="2.3"/><rect x="8.6" y="8.0" width="2.4" height="2.3"/><rect x="0.0" y="12.0" width="2.4" height="2.3"/><rect x="4.3" y="12.0" width="2.4" height="2.3"/><rect x="8.6" y="12.0" width="2.4" height="2.3"/></svg>
<div class="cbtn" style="left:819.3px;top:815.0px;width:26px;height:26px"></div>
<div class="cbtn" style="left:863.0px;top:815.0px;width:26px;height:26px"></div>
<svg class="abs" style="left:937px;top:583.5px" width="11" height="14.3" viewBox="0 0 11 14.3" fill="#3f4247"><rect x="0.0" y="0.0" width="2.4" height="2.3"/><rect x="4.3" y="0.0" width="2.4" height="2.3"/><rect x="8.6" y="0.0" width="2.4" height="2.3"/><rect x="0.0" y="4.0" width="2.4" height="2.3"/><rect x="4.3" y="4.0" width="2.4" height="2.3"/><rect x="8.6" y="4.0" width="2.4" height="2.3"/><rect x="0.0" y="8.0" width="2.4" height="2.3"/><rect x="4.3" y="8.0" width="2.4" height="2.3"/><rect x="8.6" y="8.0" width="2.4" height="2.3"/><rect x="0.0" y="12.0" width="2.4" height="2.3"/><rect x="4.3" y="12.0" width="2.4" height="2.3"/><rect x="8.6" y="12.0" width="2.4" height="2.3"/></svg>
<div class="cbtn" style="left:924.5px;top:689.5px;width:36px;height:36px"></div><svg class="abs" style="left:936px;top:701px" width="13" height="13" viewBox="0 0 13 13" fill="#2e3136"><rect x="5.500" y="0" width="2" height="13" rx=".5"/><rect x="0" y="5.500" width="13" height="2" rx=".5"/></svg>
<div class="cbtn" style="left:924.5px;top:734.0px;width:36px;height:36px"></div><svg class="abs" style="left:936.8px;top:744.9px" width="11.4" height="13.6" viewBox="0 0 12 14"><path fill="#3a3d42" d="M4.2 0.6h3.6v0.9H11.6v1.3H0.400V1.500H4.200z"/><path fill="#3a3d42" d="M1.200 3.700h9.600V12.600a1.200 1.200 0 0 1 -1.200 1.200H2.400a1.200 1.200 0 0 1 -1.200 -1.200z"/><rect fill="#9a9ca2" x="3.8" y="5" width="1.200" height="7.400"/><rect fill="#9a9ca2" x="7" y="5" width="1.200" height="7.400"/></svg>
<div class="abs" style="left:1055px;top:0;width:294px;height:827px;background:#2a2b2f"></div>
<div class="abs" style="left:1063px;top:60px;width:283px;height:25px;background:#34353a;border-radius:8px"></div>
<div class="abs" style="left:1079px;top:38px;width:42px;height:39px;background:#2b2c30;border-radius:7px"></div>
<div class="abs" style="left:1055px;top:0;width:294px;height:73.500px;background:#1d1d22"></div>
<div class="t " style="left:1079px;top:26.6px;line-height:20px;font-size:17px;color:#fff;font-weight:bold;letter-spacing:0.223px;">Custom Component</div>
<svg class="abs" style="left:1320.300px;top:28.700px" width="13.800" height="13.800" viewBox="0 0 14 14" stroke="#fff" stroke-width="2" fill="none" stroke-linecap="square"><path d="M1.500 1.500l11 11M12.500 1.500l-11 11"/></svg>
<div class="abs" style="left:1063px;top:93px;width:283px;height:54px;background:#34353a;border-radius:8px"></div>
<div class="abs" style="left:1079px;top:101px;width:42px;height:38px;background:#2b2c30;border-radius:7px"></div>
<svg class="abs" style="left:1089.300px;top:111.7px" width="21.500" height="16.600" viewBox="0 0 21.500 16.600" fill="#ffd35c"><path d="M0 0h12.600v3.500H8.200V16.600H4.400V3.500H0z"/><path d="M10 5.800h11.500v3.100h-4v7.700h-3.400V8.900H10z"/></svg>
<div class="t " style="left:1137px;top:109.0px;line-height:20px;font-size:15px;color:#ececec;font-weight:normal;letter-spacing:-0.037px;">Text Fields</div>
<svg class="abs" style="left:1312px;top:113.2px" width="13.500" height="9.500" viewBox="0 0 13.500 9.500" fill="none" stroke="#fff" stroke-width="2.100"><path d="M1.300 1.500l5.450 5.450 5.450-5.450"/></svg>
<div class="abs" style="left:1063px;top:155px;width:283px;height:55px;background:#34353a;border-radius:8px"></div>
<div class="abs" style="left:1079px;top:163px;width:42px;height:39px;background:#2b2c30;border-radius:7px"></div>
<svg class="abs" style="left:1088px;top:170.8px" width="24" height="24" viewBox="0 0 24 24"><circle cx="12" cy="12" r="10" fill="none" stroke="#4d6bff" stroke-width="2.200"/><circle cx="12" cy="12" r="6" fill="#4d6bff"/></svg>
<div class="t " style="left:1137px;top:172.0px;line-height:20px;font-size:15px;color:#ececec;font-weight:normal;letter-spacing:0.197px;">Radio Button</div>
<svg class="abs" style="left:1312px;top:175.8px" width="13.500" height="9.500" viewBox="0 0 13.500 9.500" fill="none" stroke="#fff" stroke-width="2.100"><path d="M1.300 1.500l5.450 5.450 5.450-5.450"/></svg>
<div class="abs" style="left:1063px;top:218px;width:283px;height:54px;background:#34353a;border-radius:8px"></div>
<div class="abs" style="left:1079px;top:226px;width:42px;height:38px;background:#2b2c30;border-radius:7px"></div>
<svg class="abs" style="left:1089.7px;top:234.7px" width="20.600" height="20.600" viewBox="0 0 20.600 20.600"><rect width="20.600" height="20.600" rx="2.500" fill="#f08272"/><path d="M4.600 10.600l4 4L16.200 6.600" fill="none" stroke="#2b2c30" stroke-width="1.900"/></svg>
<div class="t " style="left:1137px;top:234.0px;line-height:20px;font-size:15px;color:#ececec;font-weight:normal;letter-spacing:0.362px;">Checkbox</div>
<svg class="abs" style="left:1312px;top:238.2px" width="13.500" height="9.500" viewBox="0 0 13.500 9.500" fill="none" stroke="#fff" stroke-width="2.100"><path d="M1.300 1.500l5.450 5.450 5.450-5.450"/></svg>
<div class="abs" style="left:1063px;top:280px;width:283px;height:55px;background:#34353a;border-radius:8px"></div>
<div class="abs" style="left:1079px;top:288px;width:42px;height:39px;background:#2b2c30;border-radius:7px"></div>
<svg class="abs" style="left:1088.8px;top:301.7px" width="22.400" height="11.600" viewBox="0 0 22.400 11.600"><rect width="22.400" height="11.600" rx="5.800" fill="#c77be8"/><circle cx="5.800" cy="5.800" r="2.900" fill="#2b2c30" stroke="#e9d2f6" stroke-width="1.200"/></svg>
<div class="t " style="left:1137px;top:297.0px;line-height:20px;font-size:15px;color:#ececec;font-weight:normal;letter-spacing:0.371px;">Toggles</div>
<svg class="abs" style="left:1312px;top:300.8px" width="13.500" height="9.500" viewBox="0 0 13.500 9.500" fill="none" stroke="#fff" stroke-width="2.100"><path d="M1.300 1.500l5.450 5.450 5.450-5.450"/></svg>
<div class="abs" style="left:1063px;top:343px;width:283px;height:54px;background:#34353a;border-radius:8px"></div>
<div class="abs" style="left:1079px;top:351px;width:42px;height:38px;background:#2b2c30;border-radius:7px"></div>
<svg class="abs" style="left:1089px;top:359.3px" width="22" height="22" viewBox="0 0 22 22"><circle cx="11" cy="11" r="11" fill="#1fb892"/><path d="M7.200 9.300l3.800 3.800 3.800-3.800" fill="none" stroke="#1f2a2a" stroke-width="2"/></svg>
<div class="t " style="left:1137px;top:359.0px;line-height:20px;font-size:15px;color:#ececec;font-weight:normal;letter-spacing:0.528px;">Dropdown</div>
<svg class="abs" style="left:1312px;top:363.2px" width="13.500" height="9.500" viewBox="0 0 13.500 9.500" fill="none" stroke="#fff" stroke-width="2.100"><path d="M1.300 1.500l5.450 5.450 5.450-5.450"/></svg>
<div class="abs" style="left:1063px;top:405px;width:283px;height:55px;background:#34353a;border-radius:8px"></div>
<div class="abs" style="left:1079px;top:413px;width:42px;height:39px;background:#2b2c30;border-radius:7px"></div>
<svg class="abs" style="left:1088.7px;top:426.9px" width="22.700" height="11.600" viewBox="0 0 22.700 11.600"><rect width="22.700" height="11.600" rx="5.800" fill="#1ec6ee"/><path d="M5 5.800l2 2 3.600-3.800" fill="none" stroke="#23414d" stroke-width="1.100"/></svg>
<div class="t " style="left:1137px;top:422.0px;line-height:20px;font-size:15px;color:#ececec;font-weight:normal;letter-spacing:0.304px;">Buttons</div>
<svg class="abs" style="left:1312px;top:425.8px" width="13.500" height="9.500" viewBox="0 0 13.500 9.500" fill="none" stroke="#fff" stroke-width="2.100"><path d="M1.300 1.500l5.450 5.450 5.450-5.450"/></svg>
<div class="abs" style="left:1063px;top:468px;width:283px;height:54px;background:#34353a;border-radius:8px"></div>
<div class="abs" style="left:1079px;top:476px;width:42px;height:38px;background:#2b2c30;border-radius:7px"></div>
<svg class="abs" style="left:1089.6px;top:484.7px" width="20.800" height="20.600" viewBox="0 0 20.800 20.600"><rect width="20.800" height="20.600" rx="2.500" fill="#d3b9ff"/><path d="M4.600 10.600l4 4L16.600 6.300" fill="none" stroke="#2b2c30" stroke-width="1.900"/></svg>
<div class="t " style="left:1137px;top:484.0px;line-height:20px;font-size:15px;color:#ececec;font-weight:normal;letter-spacing:0.288px;">Chips</div>
<svg class="abs" style="left:1312px;top:488.2px" width="13.500" height="9.500" viewBox="0 0 13.500 9.500" fill="none" stroke="#fff" stroke-width="2.100"><path d="M1.300 1.500l5.450 5.450 5.450-5.450"/></svg>
<div class="abs" style="left:1063px;top:530px;width:283px;height:55px;background:#34353a;border-radius:8px"></div>
<div class="abs" style="left:1079px;top:538px;width:42px;height:39px;background:#2b2c30;border-radius:7px"></div>
<svg class="abs" style="left:1088.6px;top:546.9px" width="22.800" height="20.600" viewBox="0 0 22.800 20.600" fill="none" stroke="#ffd23e"><rect x="1.100" y="1.100" width="20.600" height="14.600" rx="1.500" stroke-width="2.200"/><path d="M6.500 17v2.300h9.800V17" fill="#ffd23e" stroke-width="1"/><path d="M5.200 6.300h12.400M5.200 10.600h12.400" stroke-width="1.600"/><path d="M13.400 4.500v3.600M9.200 8.800v3.600" stroke-width="1.800"/></svg>
<div class="t " style="left:1137px;top:547.0px;line-height:20px;font-size:15px;color:#ececec;font-weight:normal;letter-spacing:-0.137px;">Sliders</div>
<svg class="abs" style="left:1312px;top:550.8px" width="13.500" height="9.500" viewBox="0 0 13.500 9.500" fill="none" stroke="#fff" stroke-width="2.100"><path d="M1.300 1.500l5.450 5.450 5.450-5.450"/></svg>
<div class="abs" style="left:1063px;top:593px;width:283px;height:54px;background:#34353a;border-radius:8px"></div>
<div class="abs" style="left:1079px;top:601px;width:42px;height:38px;background:#2b2c30;border-radius:7px"></div>
<svg class="abs" style="left:1089.8px;top:608.1px" width="20.400" height="22.600" viewBox="0 0 20.400 22.600"><path fill="#ff9a1c" d="M4.400 0h2.400v2.200h6.800V0h2.400v2.200h1.900a2.500 2.500 0 0 1 2.500 2.500v15.400a2.500 2.500 0 0 1 -2.500 2.500H2.500A2.500 2.500 0 0 1 0 20.100V4.700a2.500 2.500 0 0 1 2.500 -2.500h1.900z"/><rect x="2.400" y="8.200" width="15.600" height="12" fill="#2b2c30"/><rect x="4.600" y="10.400" width="5.700" height="5.600" fill="#ff9a1c"/></svg>
<div class="t " style="left:1137px;top:609.0px;line-height:20px;font-size:15px;color:#ececec;font-weight:normal;letter-spacing:-0.028px;">Date Pickers</div>
<svg class="abs" style="left:1312px;top:613.2px" width="13.500" height="9.500" viewBox="0 0 13.500 9.500" fill="none" stroke="#fff" stroke-width="2.100"><path d="M1.300 1.500l5.450 5.450 5.450-5.450"/></svg>
<div class="abs" style="left:1063px;top:655px;width:283px;height:55px;background:#34353a;border-radius:8px"></div>
<div class="abs" style="left:1079px;top:663px;width:42px;height:39px;background:#2b2c30;border-radius:7px"></div>
<svg class="abs" style="left:1088.5px;top:671.3px" width="23" height="23" viewBox="0 0 23 23" fill="none" stroke="#1b9a8a"><circle cx="11.500" cy="11.500" r="10.200" stroke-width="2.200"/><path d="M11.500 5.500v6.300l4.400 2.600" stroke-width="1.900"/></svg>
<div class="t " style="left:1137px;top:672.0px;line-height:20px;font-size:15px;color:#ececec;font-weight:normal;letter-spacing:-0.035px;">Time Pickers</div>
<svg class="abs" style="left:1312px;top:675.8px" width="13.500" height="9.500" viewBox="0 0 13.500 9.500" fill="none" stroke="#fff" stroke-width="2.100"><path d="M1.300 1.500l5.450 5.450 5.450-5.450"/></svg>
<div class="abs" style="left:1063px;top:718px;width:283px;height:54px;background:#34353a;border-radius:8px"></div>
<div class="abs" style="left:1079px;top:726px;width:42px;height:38px;background:#2b2c30;border-radius:7px"></div>
<svg class="abs" style="left:1090px;top:735.2px" width="20" height="20" viewBox="0 0 20 20" fill="none" stroke="#f06a62" stroke-width="2.500"><circle cx="7.500" cy="7.500" r="6.100"/><path d="M12 12l7 7" stroke-width="2.900"/></svg>
<div class="t " style="left:1137px;top:734.0px;line-height:20px;font-size:15px;color:#ececec;font-weight:normal;letter-spacing:0.115px;">Search View</div>
<svg class="abs" style="left:1312px;top:738.2px" width="13.500" height="9.500" viewBox="0 0 13.500 9.500" fill="none" stroke="#fff" stroke-width="2.100"><path d="M1.300 1.500l5.450 5.450 5.450-5.450"/></svg>
<div class="abs" style="left:1063px;top:780px;width:283px;height:55px;background:#34353a;border-radius:8px"></div>
<div class="abs" style="left:1079px;top:788px;width:42px;height:39px;background:#2b2c30;border-radius:7px"></div>
<svg class="abs" style="left:1090px;top:797.8px" width="21.400" height="20.600" viewBox="0 0 21.400 20.600" fill="none" stroke="#c1f06e" stroke-width="2.400"><path d="M15.300 5.800V1.200H1.200v18.200h14.100v-4.600"/><path d="M7 10.300h12M15.200 5.900l4.500 4.400-4.500 4.400"/></svg>
<div class="t " style="left:1137px;top:797.0px;line-height:20px;font-size:15px;color:#ececec;font-weight:normal;letter-spacing:0.263px;">Output Cells</div>
<svg class="abs" style="left:1312px;top:800.8px" width="13.500" height="9.500" viewBox="0 0 13.500 9.500" fill="none" stroke="#fff" stroke-width="2.100"><path d="M1.300 1.500l5.450 5.450 5.450-5.450"/></svg>
</body></html>
